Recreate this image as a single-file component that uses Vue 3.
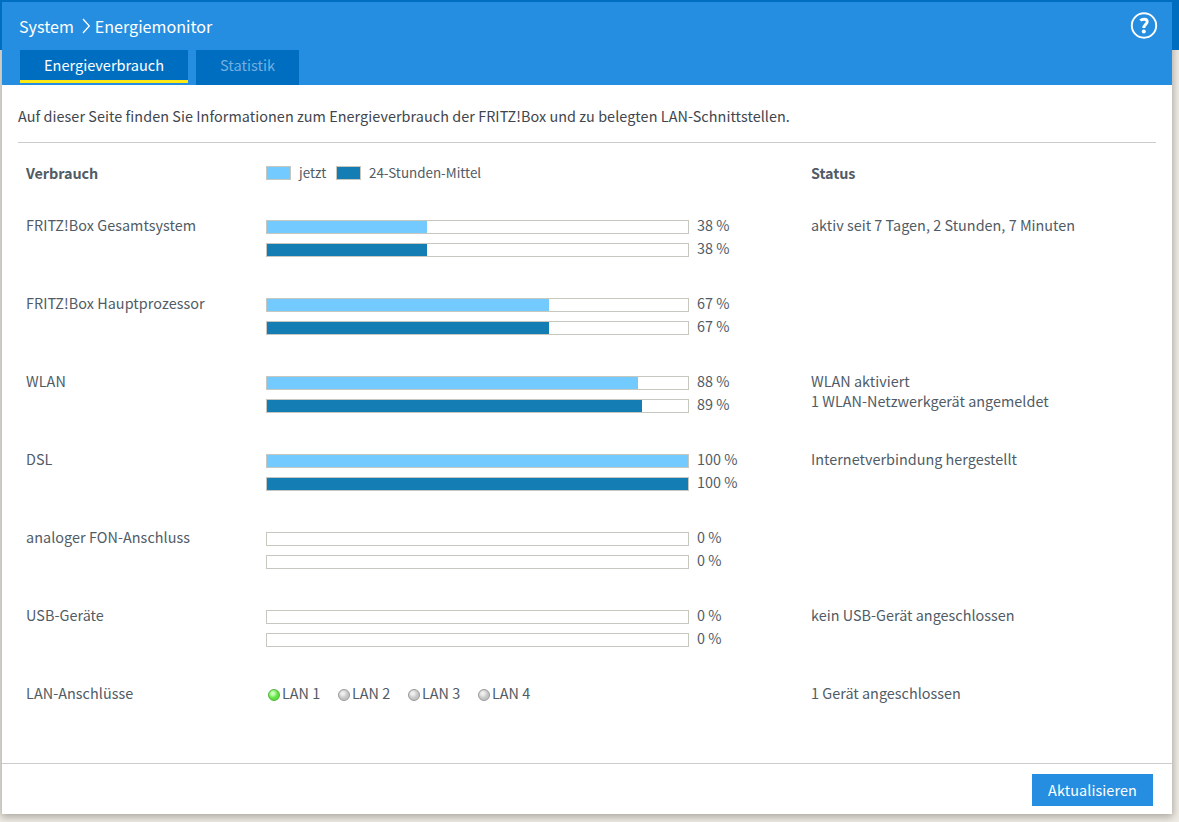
<script setup>
import { ref } from "vue";

const tabs = ref([
  { name: "Energieverbrauch", active: true },
  { name: "Statistik", active: false },
]);

const rows = ref([
  { name: "FRITZ!Box Gesamtsystem", now: 38, avg: 38, status: ["aktiv seit 7 Tagen, 2 Stunden, 7 Minuten"] },
  { name: "FRITZ!Box Hauptprozessor", now: 67, avg: 67, status: [] },
  { name: "WLAN", now: 88, avg: 89, status: ["WLAN aktiviert", "1 WLAN-Netzwerkgerät angemeldet"] },
  { name: "DSL", now: 100, avg: 100, status: ["Internetverbindung hergestellt"] },
  { name: "analoger FON-Anschluss", now: 0, avg: 0, status: [] },
  { name: "USB-Geräte", now: 0, avg: 0, status: ["kein USB-Gerät angeschlossen"] },
]);

const lanPorts = ref([
  { name: "LAN 1", on: true },
  { name: "LAN 2", on: false },
  { name: "LAN 3", on: false },
  { name: "LAN 4", on: false },
]);

function selectTab(tab) {
  tabs.value.forEach((t) => {
    t.active = t === tab;
  });
}

// whole pixels, so the end of the bar stays sharp
function barWidth(percent) {
  return Math.min(421, Math.round(percent * 4.216)) + "px";
}
</script>

<template>
  <div class="page">
    <div class="topBand"></div>
    <div class="panel">
      <header class="header">
        <div class="titleRow">
          <div class="breadcrumb">
            <span>System</span>
            <svg class="chevron" width="9" height="16" viewBox="0 0 9 16">
              <path d="M1 1 L7.3 8 L1 15" fill="none" stroke="#fff" stroke-width="1.3" />
            </svg>
            <span>Energiemonitor</span>
          </div>
          <svg class="help" width="28" height="28" viewBox="0 0 28 28">
            <circle cx="14" cy="14.5" r="12.2" fill="none" stroke="#fff" stroke-width="1.9" />
            <path d="M10.4 9.6 C12 7.8 17.2 7.3 17.2 10.7 C17.2 13.4 13.8 13.5 13.8 17.1" fill="none" stroke="#fff" stroke-width="2.9" />
            <circle cx="13.8" cy="20.6" r="2" fill="#fff" />
          </svg>
        </div>
        <nav class="tabs">
          <a v-for="tab in tabs" :key="tab.name" class="tab" :class="{ active: tab.active }" @click="selectTab(tab)">{{ tab.name }}</a>
        </nav>
      </header>

      <main class="content">
        <p class="intro">Auf dieser Seite finden Sie Informationen zum Energieverbrauch der FRITZ!Box und zu belegten LAN-Schnittstellen.</p>

        <div class="row head">
          <strong>Verbrauch</strong>
          <div class="legend">
            <span class="swatch now"></span>
            <span class="legendNow">jetzt</span>
            <span class="swatch avg"></span>
            <span class="legendAvg">24-Stunden-Mittel</span>
          </div>
          <strong>Status</strong>
        </div>

        <div v-for="row in rows" :key="row.name" class="row">
          <div><span>{{ row.name }}</span></div>
          <div class="bars">
            <div class="barLine">
              <div class="bar"><div class="fill now" :style="{ width: barWidth(row.now) }"></div></div>
              <span>{{ row.now }} %</span>
            </div>
            <div class="barLine">
              <div class="bar"><div class="fill avg" :style="{ width: barWidth(row.avg) }"></div></div>
              <span>{{ row.avg }} %</span>
            </div>
          </div>
          <div class="status">
            <div v-for="line in row.status" :key="line"><span>{{ line }}</span></div>
          </div>
        </div>

        <div class="row">
          <div><span>LAN-Anschlüsse</span></div>
          <div class="ports">
            <div v-for="port in lanPorts" :key="port.name" class="port">
              <i class="led" :class="{ on: port.on }"></i>
              <span>{{ port.name }}</span>
            </div>
          </div>
          <div class="status"><span>1 Gerät angeschlossen</span></div>
        </div>
      </main>

      <footer class="footer">
        <button class="refresh">Aktualisieren</button>
      </footer>
    </div>
  </div>
</template>

<style>
body {
  margin: 0;
  overflow: hidden;
}
</style>

<style scoped>
.page {
  position: relative;
  box-sizing: border-box;
  height: 822px;
  padding: 2px 7px 8px 2px;
  background: #f0ece6;
  font-family: "Noto Sans CJK SC", "Noto Sans", sans-serif;
  font-size: 14.4px;
  line-height: 20px;
  color: #505b66;
}

/* lies over the panel's shadow, but under its header */
.topBand {
  position: absolute;
  z-index: 1;
  top: 0;
  left: 0;
  right: 0;
  height: 50px;
  background: #006ec0;
}

.panel {
  display: flex;
  flex-direction: column;
  height: 812px;
  background: #fff;
  box-shadow: 0 2px 8px 1px rgba(60, 60, 50, 0.4);
}

.header {
  position: relative;
  z-index: 2;
  display: flex;
  flex-direction: column;
  justify-content: space-between;
  height: 83px;
  background: #268ee0;
  color: #fff;
}

.titleRow {
  display: flex;
  justify-content: space-between;
  padding: 9px 14px 0 17px;
}

.breadcrumb {
  display: flex;
  align-items: center;
  height: 29px;
  font-size: 16.1px;
}

.chevron {
  margin: 1px 4px 0 8px;
}

.tabs {
  display: flex;
  gap: 8px;
  padding-left: 18px;
  height: 35px;
}

.tab {
  box-sizing: border-box;
  height: 35px;
  padding: 0 24px;
  font-size: 14.55px;
  line-height: 29px;
  background: #006ec0;
  color: #73afe0;
  cursor: pointer;
}

.tab.active {
  height: 33px;
  border-bottom: 3px solid #ffe814;
  color: #fff;
}

.content {
  flex: 1;
  padding: 0 16px;
}

.intro {
  box-sizing: border-box;
  height: 58px;
  margin: 0 0 20px;
  padding-top: 21px;
  border-bottom: 1px solid #ccc;
  color: #3f464d;
  letter-spacing: 0.06px;
  white-space: nowrap;
}

.row {
  display: grid;
  grid-template-columns: 240px 545px 1fr;
  height: 78px;
  padding-left: 8px;
  letter-spacing: 0.05px;
}

.row.head {
  height: 52px;
  letter-spacing: -0.08px;
}

.legend {
  display: flex;
  align-items: flex-start;
  margin-top: -1px;
  font-size: 13.4px;
  letter-spacing: 0;
}

.swatch {
  box-sizing: border-box;
  width: 25px;
  height: 14px;
  margin-top: 4px;
  border: 1px solid #c6c7be;
}

.legendNow {
  width: 27px;
  margin: 0 10px 0 8px;
}

.legendAvg {
  margin-left: 8px;
}

.bars {
  display: flex;
  flex-direction: column;
  gap: 3px;
  letter-spacing: 0;
}

.barLine {
  display: flex;
  gap: 8px;
  height: 20px;
}

.bar {
  box-sizing: border-box;
  width: 423px;
  height: 14px;
  margin-top: 5px;
  border: 1px solid #c6c7be;
}

.fill {
  height: 100%;
}

.now {
  background: #73caff;
}

.avg {
  background: #147db3;
}

.status {
  letter-spacing: 0.02px;
}

.ports {
  display: flex;
  padding-left: 2px;
  letter-spacing: 0;
}

.port {
  display: flex;
  width: 70px;
  gap: 2px;
}

.led {
  box-sizing: border-box;
  width: 12px;
  height: 12px;
  margin-top: 6px;
  border: 1px solid #999;
  border-radius: 50%;
  background: radial-gradient(circle at 38% 35%, #eee 0 15%, #c8c8c8 50%, #bbb);
}

.led.on {
  border-color: #54b43c;
  background: radial-gradient(circle at 38% 35%, #c8ffb8 0 15%, #62e544 50%, #52d436);
}

.footer {
  box-sizing: border-box;
  display: flex;
  justify-content: flex-end;
  height: 51px;
  padding: 10px 19px 0 0;
  border-top: 1px solid #ccc;
}

.refresh {
  width: 121px;
  height: 32px;
  padding: 0;
  border: 0;
  background: #268ee0;
  color: #fff;
  font: inherit;
  letter-spacing: 0.1px;
}
</style>
